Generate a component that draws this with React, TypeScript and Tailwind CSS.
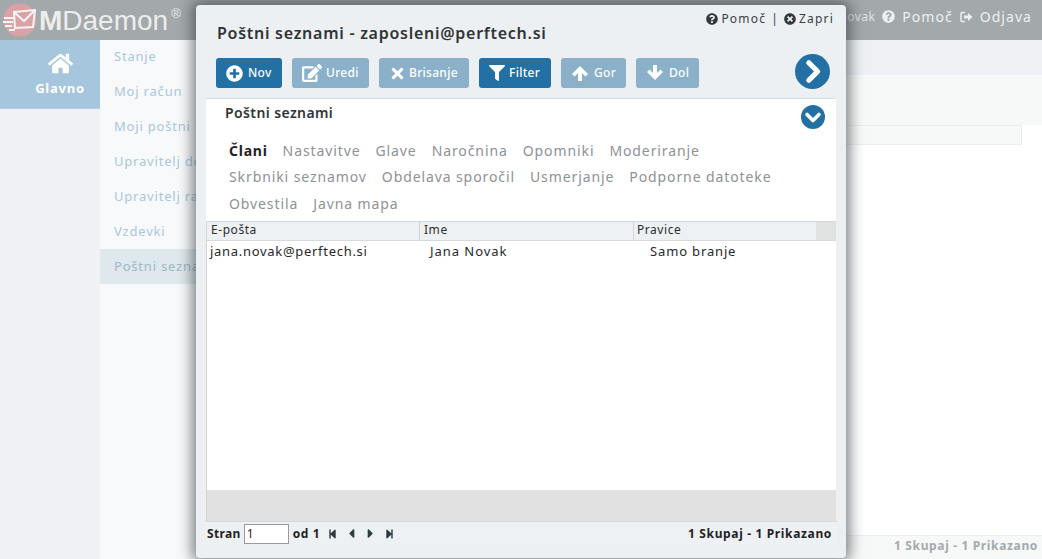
import React from 'react';
import {
  FaCaretLeft,
  FaCaretRight,
  FaEdit,
  FaFilter,
  FaHome,
  FaPlusCircle,
  FaQuestionCircle,
  FaStepBackward,
  FaStepForward,
  FaTimes,
  FaTimesCircle,
} from 'react-icons/fa';

const font = { fontFamily: '"Noto Sans", sans-serif' };

const menuItems = ['Stanje', 'Moj račun', 'Moji poštni seznami', 'Upravitelj domen', 'Upravitelj računov', 'Vzdevki'];

const tabRows = [
  ['Člani', 'Nastavitve', 'Glave', 'Naročnina', 'Opomniki', 'Moderiranje'],
  ['Skrbniki seznamov', 'Obdelava sporočil', 'Usmerjanje', 'Podporne datoteke'],
  ['Obvestila', 'Javna mapa'],
];

const Logo = () => (
  <div className="flex items-start pl-[3px] pt-[3px]">
    <svg width="34" height="34" viewBox="0 0 34 34">
      <circle cx="17" cy="17" r="16.5" fill="#d9a3a5" />
      <path d="M11 9 L32 7 L30 24 L12 25 Z" fill="none" stroke="#f3f4f4" strokeWidth="2" />
      <path d="M11 9 L21 18 L32 7" fill="none" stroke="#f3f4f4" strokeWidth="2" />
      <path d="M1 15 H11 M0 19 H10 M2 23 H9 M6 27 H12" stroke="#f3f4f4" strokeWidth="2" />
    </svg>
    <span className="ml-[2px] mt-[2px] text-[28px] leading-[32px] text-[#eceeee] font-['Liberation_Sans',sans-serif]">
      <span className="font-bold">M</span>Daemon
    </span>
    <span className="ml-[3px] mt-[4px] text-[13px] leading-none text-[#eceeee] font-['Liberation_Sans',sans-serif]">®</span>
  </div>
);

const ArrowIcon = ({ down = false }: { down?: boolean }) => (
  <svg width="18" height="18" viewBox="0 0 18 18" className={down ? 'rotate-180' : ''}>
    <path d="M9 2 L17 10 L14.500 12.500 L11 9 V17 H7 V9 L3.500 12.500 L1 10 Z" fill="currentColor" />
  </svg>
);

const CircleChevron = ({ size, down = false }: { size: number; down?: boolean }) => (
  <svg width={size} height={size} viewBox="0 0 24 24" className={down ? 'rotate-90' : ''}>
    <circle cx="12" cy="12" r="12" fill="#2270a4" />
    <path d="M9.500 6 L15.500 12 L9.500 18" fill="none" stroke="#fff" strokeWidth="3.6" strokeLinecap="round" strokeLinejoin="round" />
  </svg>
);

const Button = ({
  icon,
  label,
  active = false,
  width,
  iconBox,
}: {
  icon: React.ReactNode;
  label: string;
  active?: boolean;
  width: string;
  iconBox: string;
}) => (
  <div
    className={`flex h-[30px] items-center rounded-[3px] pl-[10px] text-[12px] font-medium tracking-[0.3px] text-white ${width} ${
      active ? 'bg-[#2270a4]' : 'bg-[#8ab0ca]'
    }`}
  >
    <span className={`flex shrink-0 justify-start ${iconBox}`}>{icon}</span>
    {label}
  </div>
);

export default function App() {
  return (
    <div className="relative h-[559px] w-[1042px] overflow-hidden bg-white" style={font}>
      {/* page behind the dialog */}
      <div className="flex h-10 items-start justify-between bg-[#a3a8aa]">
        <Logo />
        <div className="flex items-center gap-[7px] pr-[10px] pt-[6px] text-[14px] tracking-[1.05px] text-[#eef0f0]">
          <span className="text-[12px] tracking-[0.4px] text-[#dfe3e4]">Jana Novak</span>
          <FaQuestionCircle className="text-[13px]" />
          <span>Pomoč</span>
          <svg width="13" height="12" viewBox="0 0 13 12">
            <path d="M5 1.500 H2 Q1 1.500 1 2.500 V9.500 Q1 10.500 2 10.500 H5" fill="none" stroke="#eef0f0" strokeWidth="1.500" />
            <path d="M4 4.500 H8 V2 L12.500 6 L8 10 V7.500 H4 Z" fill="#eef0f0" />
          </svg>
          <span>Odjava</span>
        </div>
      </div>
      <div className="flex h-[519px]">
        <div className="w-[100px] bg-[#eff1f4]">
          <div className="flex h-[69px] flex-col items-center border-b border-[#b4cfe0] bg-[#a5c6dc] pl-[20px] pt-[11px] text-white">
            <FaHome className="text-[25px]" />
            <span className="mt-[3px] text-[13px] font-bold tracking-[0.75px]">Glavno</span>
          </div>
        </div>
        <div className="w-[100px] bg-[#f8f9fa]">
          <div className="-mt-px whitespace-nowrap text-[13px] tracking-[0.8px] text-[#a9c7de]">
            {menuItems.map((item) => (
              <div key={item} className="flex h-[35px] items-center pl-[14px]">
                {item}
              </div>
            ))}
            <div className="flex h-[35px] items-center bg-[#dfe8ec] pl-[14px] text-[#a0b8c8]">Poštni seznami</div>
          </div>
        </div>
        <div className="flex flex-1 flex-col">
          <div className="h-[35px] bg-[#eef0f3]" />
          <div className="h-[50px] bg-[#f7f9f8]" />
          <div className="mr-[20px] h-[20px] border-y border-r border-[#eceeee] bg-[#f7f9f8]" />
          <div className="flex-1" />
          <div className="h-[24px] border-t border-[#eceeee] bg-[#f7f9f8] pr-[4px] pt-[1px] text-right text-[12px] font-bold tracking-[0.65px] text-[#a3aaae]">
            1 Skupaj - 1 Prikazano
          </div>
        </div>
      </div>

      {/* dialog */}
      <div className="absolute left-[196px] top-[5px] flex h-[553px] w-[650px] flex-col rounded-[4px] bg-[#ecf0f3] shadow-[0_0_14px_4px_rgba(40,50,55,0.6)]">
        <div className="absolute right-[12px] top-[5px] flex items-center text-[12px] tracking-[1.2px] text-[#3a3f42]">
          <FaQuestionCircle className="mr-[3px] text-[12px] text-[#33383b]" />
          Pomoč
          <span className="mx-[5px]">|</span>
          <FaTimesCircle className="mr-[3px] text-[12px] text-[#33383b]" />
          Zapri
        </div>
        <div className="pl-[21px] pt-[15px] text-[16px] font-semibold leading-[26px] tracking-[0.73px] text-[#303436]">
          Poštni seznami - zaposleni@perftech.si
        </div>
        <div className="flex items-center pl-[20px] pr-[16px] pt-[11px]">
          <div className="flex gap-[10px]">
            <Button icon={<FaPlusCircle className="text-[17px]" />} label="Nov" active width="w-[66px]" iconBox="w-[22px]" />
            <Button icon={<FaEdit className="text-[20px]" />} label="Uredi" width="w-[77px]" iconBox="w-[24px]" />
            <Button icon={<FaTimes className="text-[17px]" />} label="Brisanje" width="w-[90px]" iconBox="w-[20px]" />
            <Button icon={<FaFilter className="text-[16px]" />} label="Filter" active width="w-[72px]" iconBox="w-[20px]" />
            <Button icon={<ArrowIcon />} label="Gor" width="w-[65px]" iconBox="w-[23px]" />
            <Button icon={<ArrowIcon down />} label="Dol" width="w-[63px]" iconBox="w-[23px]" />
          </div>
          <div className="ml-auto mt-[-3px]">
            <CircleChevron size={35} />
          </div>
        </div>
        <div className="mx-[10px] mt-[9px] flex flex-1 flex-col border-t border-[#d5d9dc] bg-white">
          <div className="relative pl-[19px] pt-[4px] text-[14px] font-semibold leading-[20px] tracking-[0.4px] text-[#303436]">
            Poštni seznami
            <div className="absolute right-[11px] top-[6px]">
              <CircleChevron size={24} down />
            </div>
          </div>
          <div className="pl-[23px] pt-[14px] text-[14px] tracking-[0.9px] text-[#8d9295]">
            {tabRows.map((row) => (
              <div key={row[0]} className="flex h-[26.5px] items-center gap-[15px]">
                {row.map((tab) => (
                  <span key={tab} className={tab === 'Člani' ? 'font-bold tracking-[0.75px] text-[#1f2224]' : ''}>
                    {tab}
                  </span>
                ))}
              </div>
            ))}
          </div>
          <div className="mt-[4.5px] flex h-[20px] border-y border-l border-[#d6d9db] bg-[#eef1f3] text-[12px] leading-[16px] tracking-[0.55px] text-[#2b2f31]">
            <div className="w-[213px] border-r border-[#cfd3d5] pl-[4px]">E-pošta</div>
            <div className="w-[214px] border-r border-[#cfd3d5] pl-[4px]">Ime</div>
            <div className="w-[182px] pl-[3px]">Pravice</div>
            <div className="flex-1 bg-[#e1e2e2]" />
          </div>
          <div className="flex flex-1 flex-col border-l border-[#d9d4c8]">
            <div className="flex h-[22px] items-center text-[13px] tracking-[0.7px] text-[#26292b]">
              <div className="w-[213px] pl-[3px]">jana.novak@perftech.si</div>
              <div className="w-[230px] pl-[10px] tracking-[0.95px]">Jana Novak</div>
              <div className="tracking-[0.85px]">Samo branje</div>
            </div>
            <div className="flex-1" />
            <div className="h-[31px] bg-[#e1e1e1]" />
          </div>
          <div className="-mx-px flex h-[24px] items-center justify-between border-t border-[#d5d9dc] bg-[#eef1f3] pr-[5px] text-[12px] font-bold tracking-[0.65px] text-[#1f2224]">
            <div className="flex items-center">
              <span className="ml-[2px] tracking-[0.35px]">Stran</span>
              <input
                readOnly
                value="1"
                className="ml-[3px] h-[20px] w-[45px] border border-[#9a9a9a] bg-white pl-[2px] text-[12px] font-normal text-[#222] outline-none"
              />
              <span className="ml-[4px]">od 1</span>
              <div className="ml-[8px] flex items-center gap-[10px] text-[12px] text-[#2c3c44]">
                <FaStepBackward className="w-[9px]" />
                <FaCaretLeft className="w-[9px] text-[15px]" />
                <FaCaretRight className="w-[9px] text-[15px]" />
                <FaStepForward className="w-[9px]" />
              </div>
            </div>
            <span>1 Skupaj - 1 Prikazano</span>
          </div>
          <div className="-mx-px h-[13px] bg-[#ecf0f3]" />
        </div>
      </div>
    </div>
  );
}
